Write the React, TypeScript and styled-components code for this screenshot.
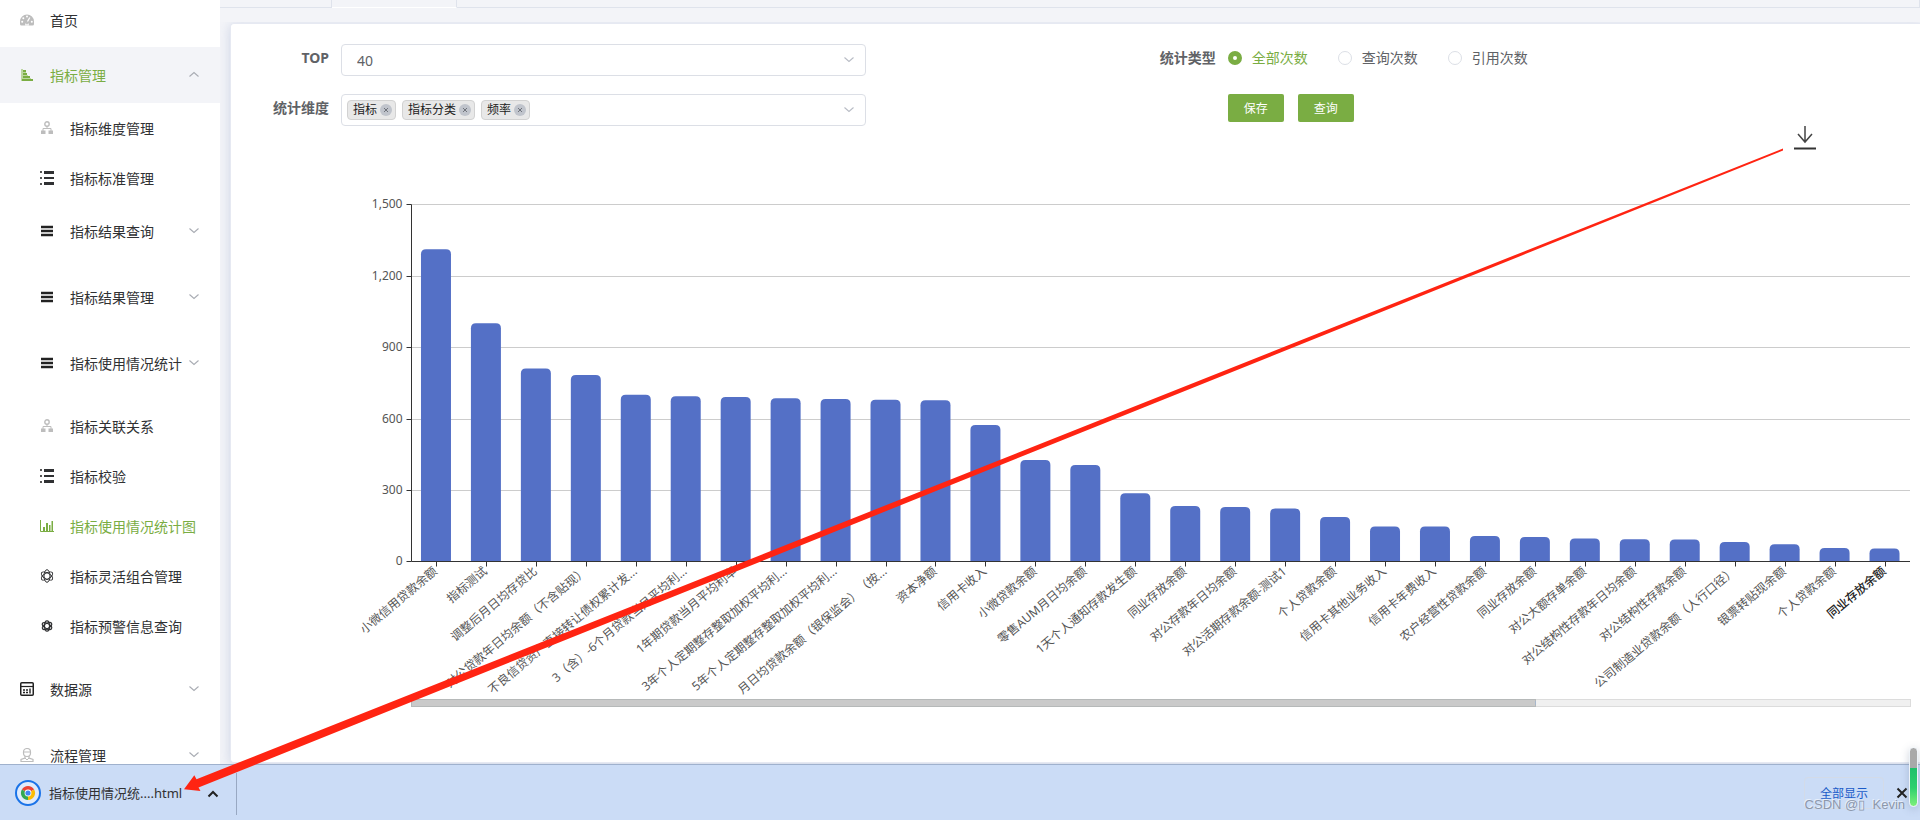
import React, { useState } from "react";
import styled, { createGlobalStyle, css } from "styled-components";

const GlobalStyle = createGlobalStyle`
  *, *::before, *::after { box-sizing: border-box; }
  body {
    margin: 0;
    font-family: "Noto Sans", "Noto Sans CJK SC", sans-serif;
    font-size: 14px;
    color: #303133;
    background: #f3f4f8;
    text-spacing-trim: space-all;
  }
  button, input, select { font-family: inherit; }
`;

/* ---------- shell ---------- */

const Page = styled.div`
  position: relative;
  display: flex;
  flex-direction: column;
  min-height: 100vh;
  overflow: hidden;
`;

const Workspace = styled.div`
  display: flex;
  flex: 1;
`;

const Sidebar = styled.nav`
  flex: 0 0 220px;
  height: calc(100vh - 56px);
  overflow: hidden;
  background: #fff;
`;

const Main = styled.main`
  display: flex;
  flex: 1;
  flex-direction: column;
  min-width: 0;
`;

const TabStrip = styled.div`
  display: flex;
  height: 8px;
`;

const TabEdge = styled.div<{ $width?: number; $active?: boolean }>`
  flex: ${(p) => (p.$width ? `0 0 ${p.$width}px` : "1")};
  border-right: 1px solid #dfe3ec;
  border-bottom: 1px solid ${(p) => (p.$active ? "#fff" : "#dfe3ec")};
`;

const Card = styled.section`
  display: flex;
  flex: 1;
  flex-direction: column;
  margin: 15px 0 1px 10px;
  border: 1px solid #e6e9f2;
  border-right: 0;
  border-radius: 4px 0 0 4px;
  background: #fff;
  box-shadow: 0 2px 12px rgba(120, 140, 190, 0.3);
  clip-path: inset(-1px 0 -1px -10px);
`;

/* ---------- side menu ---------- */

const MenuList = styled.ul`
  margin: 0;
  padding: 0;
  list-style: none;
`;

type RowKind = "top" | "home" | "leaf" | "group";

const MenuItem = styled.li<{ $kind: RowKind; $spaced?: boolean }>`
  padding-bottom: ${(p) => (p.$kind === "group" || p.$spaced ? 10 : 0)}px;
`;

const MenuLink = styled.a<{ $kind: RowKind; $active?: boolean; $tinted?: boolean }>`
  display: flex;
  align-items: center;
  gap: 16px;
  height: ${(p) => (p.$kind === "leaf" ? 50 : p.$kind === "home" ? 47 : 56)}px;
  padding: 0 20px 0 ${(p) => (p.$kind === "leaf" || p.$kind === "group" ? 40 : 20)}px;
  ${(p) => p.$kind === "home" && css`padding-bottom: 8px;`}
  color: ${(p) => (p.$active ? "#7aad43" : "#303133")};
  background: ${(p) => (p.$tinted ? "#f3f4f8" : "transparent")};
  line-height: 20px;
  text-decoration: none;
  white-space: nowrap;

  > svg { flex: none; }
`;

const MenuLabel = styled.span`
  flex: 1;
  min-width: 0;
  padding-top: 2px;
`;

/* ---------- icons ---------- */

const Icon = ({ children }: { children: React.ReactNode }) => (
  <svg width="14" height="14" viewBox="0 0 14 14" fill="none" aria-hidden="true">
    {children}
  </svg>
);

const GaugeIcon = () => (
  <Icon>
    <path d="M7 1.5a7 7 0 0 0-7 7V11a1.5 1.5 0 0 0 1.5 1.5h11A1.5 1.5 0 0 0 14 11V8.500a7 7 0 0 0-7-7z" fill="#bdbdbd" />
    <circle cx="3.300" cy="5.200" r="1" fill="#fff" />
    <circle cx="7" cy="3.500" r="1" fill="#fff" />
    <circle cx="2.200" cy="8.700" r="1" fill="#fff" />
    <circle cx="11.800" cy="8.700" r="1" fill="#fff" />
    <path d="M9.800 4.500 7.500 8.500" stroke="#fff" strokeWidth="1.300" />
    <path d="M5 12.500a2 2.700 0 1 1 4 0z" fill="#fff" />
    <circle cx="7" cy="10.500" r="1" fill="#bdbdbd" />
  </Icon>
);

const StairIcon = () => (
  <Icon>
    <path d="M1 1h2v12H1z" fill="#bcd6a1" />
    <path d="M3 2h3v2H3zM3 5h4v2H3zM3 8h7v2H3zM2 11h11v2H2z" fill="#7aad43" />
    <path d="M3 4h3v1H3zM3 7h5v1H3zM3 10h8v1H3z" fill="#bcd6a1" />
  </Icon>
);

const OrgIcon = () => (
  <Icon>
    <circle cx="7" cy="3" r="2.200" stroke="#bdbdbd" strokeWidth="1.400" />
    <path d="M7 5.200v2.300M3 10V7.500h8V10" stroke="#bdbdbd" />
    <path d="M1 9.500h4.500V13H1zM8.500 9.500H13V13H8.500z" fill="#bdbdbd" />
  </Icon>
);

const ListIcon = () => (
  <Icon>
    <path d="M0 0h2v2H0zM0 6h2v2H0zM0 12h2v2H0z" fill="#555" />
    <path d="M4 0h10v3H4zM4 6h10v2H4zM4 11h10v3H4z" fill="#303133" />
  </Icon>
);

const StackIcon = () => (
  <Icon>
    <path d="M1 1h12v12H1z" fill="#c9c9c9" />
    <path d="M1 2h12v2H1zM1 6h12v2H1zM1 10h12v2H1z" fill="#222" />
  </Icon>
);

const BarsIcon = () => (
  <Icon>
    <path d="M.5 1v11.500H14" stroke="#7aad43" />
    <path d="M3 8h2v4H3zM6 4h2v8H6zM9 6h1.500v6H9zM11.500 2H13v10h-1.500z" fill="#7aad43" />
  </Icon>
);

const ANGLES = [0, 60, 120];

const AtomIcon = () => (
  <Icon>
    <g stroke="#303133">
      {ANGLES.map((a) => (
        <ellipse key={a} cx="7" cy="7" rx="3" ry="6.300" transform={`rotate(${a} 7 7)`} />
      ))}
    </g>
  </Icon>
);

const SmallAtomIcon = () => (
  <Icon>
    <g stroke="#303133" strokeWidth="1.200">
      {ANGLES.map((a) => (
        <ellipse key={a} cx="7" cy="7" rx="2.500" ry="5.200" transform={`rotate(${a} 7 7)`} />
      ))}
    </g>
  </Icon>
);

const DataIcon = () => (
  <Icon>
    <rect x=".75" y=".75" width="12.500" height="12.500" rx="1" stroke="#222" strokeWidth="1.500" />
    <path d="M1 4.500h12" stroke="#222" strokeWidth="1.200" />
    <path d="M3 8h2M6 8h2M3 10.500h2M6 10.500h2M10 6.500v5" stroke="#222" strokeWidth="1.400" />
  </Icon>
);

const UserIcon = () => (
  <Icon>
    <rect x="3.500" y=".5" width="7" height="8" rx="3.500" stroke="#bdbdbd" strokeWidth="1.200" />
    <path d="M4 4h6" stroke="#bdbdbd" />
    <path d="M5 8v2l-4 1.500V13.500h12V11.500L9 10V8" stroke="#bdbdbd" strokeWidth="1.200" />
    <path d="m5 10 2 2 2-2" stroke="#bdbdbd" />
  </Icon>
);

const Chevron = ({ up, color = "#a9acb3" }: { up?: boolean; color?: string }) => (
  <svg width="12" height="12" viewBox="0 0 12 12" fill="none" aria-hidden="true">
    <path d={up ? "M1.500 7.500 6 3.500l4.500 4" : "M1.500 3.500 6 7.500l4.500-4"} stroke={color} strokeWidth="1.100" />
  </svg>
);

/* ---------- filter form ---------- */

const Filters = styled.form`
  display: flex;
  padding-top: 20px;
`;

const FieldColumn = styled.div<{ $wide?: boolean }>`
  display: grid;
  grid-template-columns: 98px minmax(0, 1fr);
  grid-auto-rows: ${(p) => (p.$wide ? 32 : 28)}px;
  gap: ${(p) => (p.$wide ? 18 : 22)}px 12px;
  ${(p) => (p.$wide ? css`width: 37.6%;` : css`flex: 1; margin-left: 14.9%;`)}
`;

const FieldLabel = styled.label`
  color: #606266;
  font-weight: 700;
  line-height: 28px;
  text-align: right;
  white-space: nowrap;
`;

const SelectBox = styled.div`
  display: flex;
  align-items: center;
  gap: 6px;
  height: 32px;
  padding: 0 10px 0 5px;
  border: 1px solid #dcdfe6;
  border-radius: 4px;
  background: #fff;
`;

const NativeSelect = styled.select`
  flex: 1;
  height: 30px;
  padding: 0 10px;
  border: 0;
  appearance: none;
  background: transparent;
  color: #606266;
  font-size: 14px;
  outline: none;
`;

const TagInput = styled.input`
  flex: 1;
  min-width: 0;
  height: 28px;
  border: 0;
  background: transparent;
  outline: none;
`;

const Tag = styled.span`
  display: flex;
  align-items: center;
  gap: 3px;
  height: 20px;
  padding: 0 3px 0 5px;
  border: 1px solid #d2d2d2;
  border-radius: 4px;
  background: #e8e8e8;
  color: #222;
  font-size: 12px;
  line-height: 18px;
  white-space: nowrap;
`;

const TagClose = styled.button`
  display: flex;
  align-items: center;
  justify-content: center;
  width: 12px;
  height: 12px;
  padding: 0;
  border: 0;
  border-radius: 50%;
  background: #c0c4cc;
`;

const RadioRow = styled.div`
  display: flex;
  align-items: center;
  gap: 30px;
`;

const RadioLabel = styled.label<{ $checked: boolean }>`
  display: flex;
  align-items: center;
  gap: 10px;
  color: ${(p) => (p.$checked ? "#7aad43" : "#606266")};
  line-height: 20px;
  white-space: nowrap;
`;

const Radio = styled.input`
  width: 14px;
  height: 14px;
  margin: 0;
  border: 1px solid #dcdfe6;
  border-radius: 50%;
  appearance: none;
  background: #fff;

  &:checked {
    border: 5px solid #7aad43;
  }
`;

const ButtonRow = styled.div`
  display: flex;
  gap: 14px;
`;

const ActionButton = styled.button`
  width: 56px;
  height: 28px;
  padding: 0;
  border: 0;
  border-radius: 2px;
  background: #7aad43;
  color: #fff;
  font-size: 12px;
`;

/* ---------- chart ---------- */

const ChartTools = styled.div`
  display: flex;
  justify-content: flex-end;
  height: 24px;
  padding-right: 103px;
`;

const IconButton = styled.button`
  display: flex;
  align-items: center;
  justify-content: center;
  padding: 0;
  border: 0;
  background: transparent;
`;

const ChartSvg = styled.svg`
  display: block;
  width: 100%;
  height: auto;
  font-size: 12px;
`;

const USAGE: [string, number][] = [
  ["小微信用贷款余额", 1312],
  ["指标测试", 1001],
  ["调整后月日均存贷比", 811],
  ["对公贷款年日均余额（不含贴现）", 784],
  ["不良信贷资产直接转让债权累计发...", 701],
  ["3（含）-6个月贷款当月平均利...", 694],
  ["1年期贷款当月平均利率", 691],
  ["3年个人定期整存整取加权平均利...", 686],
  ["5年个人定期整存整取加权平均利...", 683],
  ["月日均贷款余额（银保监会）（按...", 680],
  ["资本净额", 678],
  ["信用卡收入", 574],
  ["小微贷款余额", 426],
  ["零售AUM月日均余额", 405],
  ["1天个人通知存款发生额", 287],
  ["同业存放余额", 233],
  ["对公存款年日均余额", 229],
  ["对公活期存款余额-测试1", 223],
  ["个人贷款余额", 187],
  ["信用卡其他业务收入", 147],
  ["信用卡年费收入", 147],
  ["农户经营性贷款余额", 107],
  ["同业存放余额", 103],
  ["对公大额存单余额", 97],
  ["对公结构性存款年日均余额", 94],
  ["对公结构性存款余额", 92],
  ["公司制造业贷款余额（人行口径）", 82],
  ["银票转贴现余额", 72],
  ["个人贷款余额", 57],
  ["同业存放余额", 55],
];

const CHART = { width: 1689, height: 562, left: 180.5, right: 1679, top: 54.5, bottom: 411.5, max: 1500 };
const BAR_WIDTH = 30;

const yOf = (value: number) => CHART.bottom - (value / CHART.max) * (CHART.bottom - CHART.top);

function barPath(x: number, y: number) {
  const r = 5;
  return `M${x} ${CHART.bottom}V${y + r}q0 ${-r} ${r} ${-r}h${BAR_WIDTH - 2 * r}q${r} 0 ${r} ${r}V${CHART.bottom}z`;
}

function UsageChart() {
  const step = (CHART.right - CHART.left) / USAGE.length;
  return (
    <ChartSvg viewBox={`0 0 ${CHART.width} ${CHART.height}`} role="img" aria-label="指标使用情况统计图">
      {[0, 300, 600, 900, 1200, 1500].map((v) => {
        const y = Math.round(yOf(v)) + (v === 0 || v === 1500 ? -0.5 : 0.5);
        return (
          <g key={v}>
            {v > 0 && <path d={`M${CHART.left} ${y}H${CHART.right}`} stroke="#ccc" />}
            <path d={`M${CHART.left - 5} ${y}H${CHART.left}`} stroke="#333" />
            <text x={CHART.left - 9} y={y + 3} textAnchor="end" fill="#555">
              {v.toLocaleString("en-US")}
            </text>
          </g>
        );
      })}
      {USAGE.map(([name, value], i) => (
        <path
          key={name + i}
          d={barPath(CHART.left + step * (i + 0.5) - BAR_WIDTH / 2 - 0.5, yOf(value))}
          fill="#5470c6"
        />
      ))}
      <path d={`M${CHART.left} ${CHART.top}V${CHART.bottom}H${CHART.right}`} stroke="#333" fill="none" />
      {USAGE.map(([name], i) => {
        const x = CHART.left + step * (i + 0.5);
        const last = i === USAGE.length - 1;
        return (
          <g key={name + i}>
            <path d={`M${Math.floor(x) + 0.5} ${CHART.bottom}v5`} stroke="#333" />
            <text
              transform={`translate(${x - 1} ${CHART.bottom + 8}) rotate(-40)`}
              dy="4"
              textAnchor="end"
              fill={last ? "#222" : "#555"}
              fontWeight={last ? 500 : 400}
            >
              {name}
            </text>
          </g>
        );
      })}
      <rect x="180.500" y="549.500" width="1499" height="7" fill="#f0f0f0" stroke="#dcdcdc" />
      <rect x="180.500" y="549.500" width="1124" height="7" fill="#cacaca" stroke="#b6b9b9" />
      <path d="M1304.500 551v4" stroke="#a7b7cc" />
    </ChartSvg>
  );
}

/* ---------- download shelf ---------- */

const Shelf = styled.footer`
  display: flex;
  align-items: center;
  height: 56px;
  padding: 0 12px 0 15px;
  border-top: 1px solid #9fb1cd;
  background: #cbdcf6;
`;

const ShelfFile = styled.button`
  display: flex;
  align-items: center;
  gap: 8px;
  width: 168px;
  padding: 0;
  border: 0;
  background: transparent;
  color: #303133;
  font-size: 13px;
  line-height: 20px;
  white-space: nowrap;
`;

const ShelfToggle = styled(IconButton)`
  width: 54px;
  height: 42px;
  margin: 2px auto 0 0;
  padding-left: 6px;
  border-right: 1px solid #98a8c2;
`;

const ShowAll = styled.button`
  width: 80px;
  height: 32px;
  margin-right: 12px;
  border: 1px solid #d3dbe8;
  border-radius: 4px;
  background: transparent;
  color: #1a5bc8;
  font-size: 12px;
`;

const ChromeLogo = () => (
  <svg width="26" height="26" viewBox="0 0 26 26" aria-hidden="true">
    <circle cx="13" cy="13" r="12" fill="#dfeafb" stroke="#1a73e8" strokeWidth="2" />
    <path d="M13 13 6.900 9.500a7 7 0 0 1 12.200 0z" fill="#ea4335" />
    <path d="M13 13h0L19.100 9.500A7 7 0 0 1 13 20z" fill="#fbbc05" />
    <path d="M13 13v7A7 7 0 0 1 6.900 9.500z" fill="#34a853" />
    <circle cx="13" cy="13" r="3.400" fill="#fff" />
    <circle cx="13" cy="13" r="2.600" fill="#4285f4" />
  </svg>
);

/* ---------- overlays ---------- */

const ArrowOverlay = styled.svg`
  position: absolute;
  inset: 0;
  width: 100%;
  height: 100%;
  pointer-events: none;
`;

const ScrollThumb = styled.div`
  position: absolute;
  right: 2px;
  bottom: 13px;
  width: 9px;
  height: 60px;
  border: 1px solid #eef3f8;
  border-radius: 5px;
  background: linear-gradient(#a9a9a9 0 20px, #1fc06a 20px, #2fd06d 40px, #7df07a);
  box-shadow: 0 2px 8px rgba(90, 110, 140, 0.3);
`;

const Watermark = styled.div`
  position: absolute;
  right: 15px;
  bottom: 7px;
  color: #8d98ab;
  font-family: "Liberation Sans", sans-serif;
  font-size: 13px;
  line-height: 16px;
  text-shadow: -1px -1px 0 #e9f0fb;
  white-space: pre;
`;

/* ---------- page ---------- */

interface Entry {
  label: string;
  icon: React.ReactNode;
  kind: RowKind;
  active?: boolean;
  tinted?: boolean;
  chevron?: "up" | "down";
  spaced?: boolean;
}

const MENU: Entry[] = [
  { label: "首页", icon: <GaugeIcon />, kind: "home" },
  { label: "指标管理", icon: <StairIcon />, kind: "top", active: true, tinted: true, chevron: "up" },
  { label: "指标维度管理", icon: <OrgIcon />, kind: "leaf" },
  { label: "指标标准管理", icon: <ListIcon />, kind: "leaf" },
  { label: "指标结果查询", icon: <StackIcon />, kind: "group", chevron: "down" },
  { label: "指标结果管理", icon: <StackIcon />, kind: "group", chevron: "down" },
  { label: "指标使用情况统计", icon: <StackIcon />, kind: "group", chevron: "down" },
  { label: "指标关联关系", icon: <OrgIcon />, kind: "leaf" },
  { label: "指标校验", icon: <ListIcon />, kind: "leaf" },
  { label: "指标使用情况统计图", icon: <BarsIcon />, kind: "leaf", active: true },
  { label: "指标灵活组合管理", icon: <AtomIcon />, kind: "leaf" },
  { label: "指标预警信息查询", icon: <SmallAtomIcon />, kind: "leaf", spaced: true },
  { label: "数据源", icon: <DataIcon />, kind: "top", chevron: "down", spaced: true },
  { label: "流程管理", icon: <UserIcon />, kind: "top", chevron: "down" },
];

const COUNT_TYPES = ["全部次数", "查询次数", "引用次数"];

export default function App() {
  const [countType, setCountType] = useState(COUNT_TYPES[0]);
  const [tags, setTags] = useState(["指标", "指标分类", "频率"]);

  return (
    <>
      <GlobalStyle />
      <Page>
        <Workspace>
          <Sidebar>
            <MenuList>
              {MENU.map((m) => (
                <MenuItem key={m.label} $kind={m.kind} $spaced={m.spaced}>
                  <MenuLink href="#" $kind={m.kind} $active={m.active} $tinted={m.tinted}>
                    {m.icon}
                    <MenuLabel>{m.label}</MenuLabel>
                    {m.chevron && <Chevron up={m.chevron === "up"} />}
                  </MenuLink>
                </MenuItem>
              ))}
            </MenuList>
          </Sidebar>
          <Main>
            <TabStrip>
              <TabEdge $width={112} />
              <TabEdge $width={125} $active />
              <TabEdge />
            </TabStrip>
            <Card>
              <Filters onSubmit={(e) => e.preventDefault()}>
                <FieldColumn $wide>
                  <FieldLabel htmlFor="top">TOP</FieldLabel>
                  <SelectBox>
                    <NativeSelect id="top" defaultValue="40">
                      <option>40</option>
                    </NativeSelect>
                    <Chevron color="#b8bcc5" />
                  </SelectBox>
                  <FieldLabel htmlFor="dimension">统计维度</FieldLabel>
                  <SelectBox>
                    {tags.map((t) => (
                      <Tag key={t}>
                        {t}
                        <TagClose
                          type="button"
                          aria-label={`移除${t}`}
                          onClick={() => setTags(tags.filter((other) => other !== t))}
                        >
                          <svg width="6" height="6" viewBox="0 0 6 6" aria-hidden="true">
                            <path d="m1 1 4 4M5 1 1 5" stroke="#6f737b" />
                          </svg>
                        </TagClose>
                      </Tag>
                    ))}
                    <TagInput id="dimension" type="text" />
                    <Chevron color="#b8bcc5" />
                  </SelectBox>
                </FieldColumn>
                <FieldColumn>
                  <FieldLabel as="span" id="count-type">统计类型</FieldLabel>
                  <RadioRow role="radiogroup" aria-labelledby="count-type">
                    {COUNT_TYPES.map((t) => (
                      <RadioLabel key={t} $checked={t === countType}>
                        <Radio
                          type="radio"
                          name="countType"
                          checked={t === countType}
                          onChange={() => setCountType(t)}
                        />
                        {t}
                      </RadioLabel>
                    ))}
                  </RadioRow>
                  <span />
                  <ButtonRow>
                    <ActionButton type="button">保存</ActionButton>
                    <ActionButton type="submit">查询</ActionButton>
                  </ButtonRow>
                </FieldColumn>
              </Filters>
              <ChartTools>
                <IconButton type="button" aria-label="下载">
                  <svg width="24" height="24" viewBox="0 0 24 24" fill="none" aria-hidden="true">
                    <path d="M12 0v16M5 8l7 8 7-8" stroke="#444" strokeWidth="1.500" />
                    <path d="M1 22.500h22" stroke="#333" strokeWidth="2" />
                  </svg>
                </IconButton>
              </ChartTools>
              <UsageChart />
            </Card>
          </Main>
        </Workspace>
        <Shelf>
          <ShelfFile type="button">
            <ChromeLogo />
            指标使用情况统....html
          </ShelfFile>
          <ShelfToggle type="button" aria-label="展开">
            <svg width="12" height="8" viewBox="0 0 12 8" fill="none" aria-hidden="true">
              <path d="m1.500 6.500 4.500-4.500 4.500 4.500" stroke="#222" strokeWidth="2" />
            </svg>
          </ShelfToggle>
          <ShowAll type="button">全部显示</ShowAll>
          <IconButton type="button" aria-label="关闭">
            <svg width="12" height="12" viewBox="0 0 12 12" aria-hidden="true">
              <path d="m1.500 1.500 9 9M10.500 1.500l-9 9" stroke="#222" strokeWidth="2" />
            </svg>
          </IconButton>
        </Shelf>
        <Watermark>CSDN @▯  Kevin</Watermark>
        <ScrollThumb />
        <ArrowOverlay viewBox="0 0 1920 820" preserveAspectRatio="none" aria-hidden="true">
          <path d="M1783 148.500v2L198.500 787.500l2 3.500-16.500-1.700 10.300-14 2.200 4z" fill="#ff2412" />
        </ArrowOverlay>
      </Page>
    </>
  );
}
